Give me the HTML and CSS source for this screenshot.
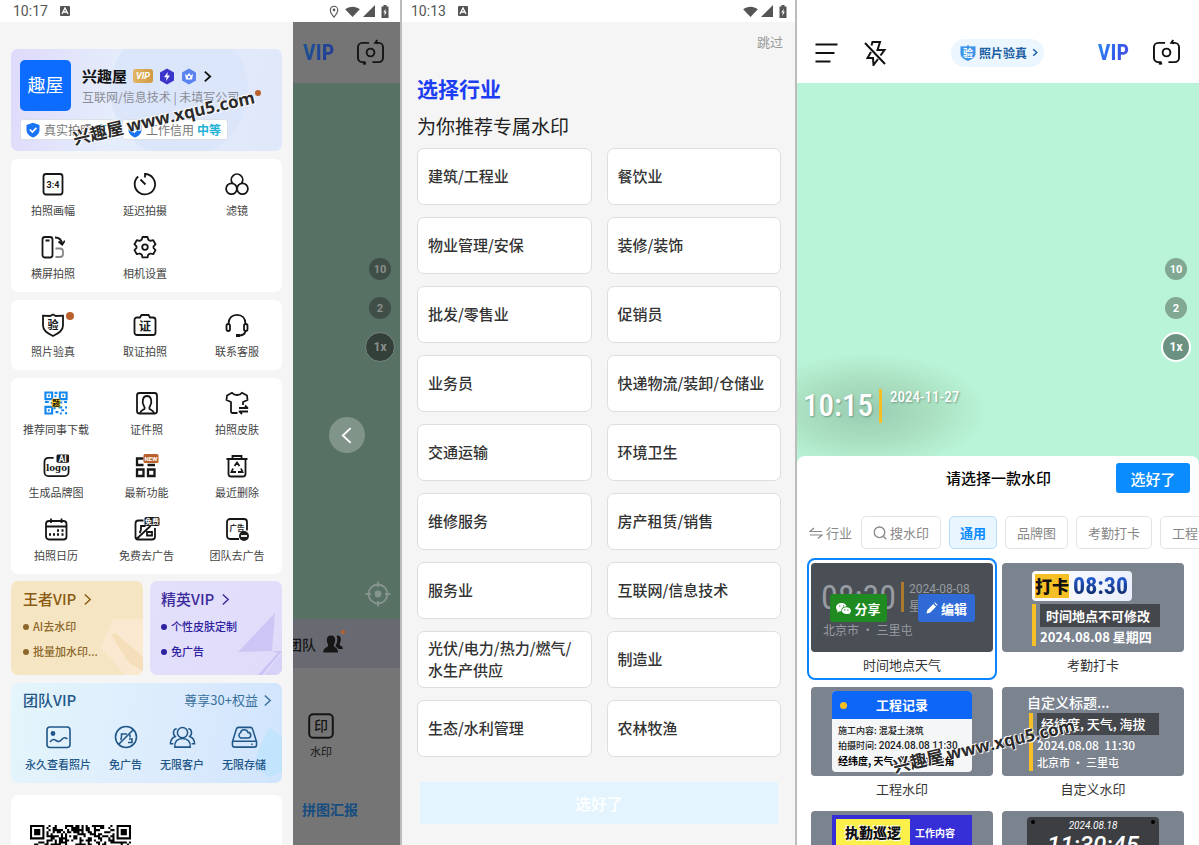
FILE: index.html
```html
<!DOCTYPE html>
<html lang="zh-CN">
<head>
<meta charset="utf-8">
<meta name="viewport" content="width=device-width, initial-scale=1">
<title>水印相机</title>
<link rel="stylesheet" href="styles.css">
</head>
<body>
<svg class="sprite" aria-hidden="true">
  <symbol id="i-notice" viewBox="0 0 12 12"><rect x="1" y="1" width="10" height="10" rx="1" fill="#555"/><path d="M3 9 6 3l3 6M4.300 7h3.400" fill="none" stroke="#fff" stroke-width="1.300"/></symbol>
  <symbol id="i-pin" viewBox="0 0 12 14"><path d="M6 13C3 9.500 2 7.500 2 5.300a4 4 0 0 1 8 0C10 7.500 9 9.500 6 13z" fill="none" stroke="#555" stroke-width="1.200"/><circle cx="6" cy="5.300" r="1.400" fill="#555"/></symbol>
  <symbol id="i-wifi" viewBox="0 0 16 12"><path d="M0 3.500C4.500-.2 11.500-.2 16 3.500L8 12z" fill="#555"/></symbol>
  <symbol id="i-signal" viewBox="0 0 12 12"><path d="M12 0v12H0z" fill="#555"/></symbol>
  <symbol id="i-battery" viewBox="0 0 8 13"><path d="M2.500 0h3v1.500H7.500V13H.5V1.500h2z" fill="#555"/><path d="M4.800 3.500 2.300 7.600h1.500L3.300 11l2.500-4.200H4.300z" fill="#fff"/></symbol>
  <symbol id="i-chevron" viewBox="0 0 10 14"><path d="m2 1.500 6 5.500-6 5.500"/></symbol>
  <symbol id="i-shield" viewBox="0 0 16 16"><path d="M8 .8 14.500 3v5c0 3.500-2.800 6-6.500 7.500C4.300 14 1.500 11.500 1.500 8V3z" fill="#1a73f5"/><path d="m4.800 7.500 2.600 2.600 4-4.200" fill="none" stroke="#fff" stroke-width="1.700"/></symbol>
  <symbol id="i-ratio" viewBox="0 0 24 24"><rect x="2.500" y="2" width="19" height="20.500" rx="2.500"/><text x="12" y="15.500" class="svg-text latin" font-size="9">3:4</text></symbol>
  <symbol id="i-timer" viewBox="0 0 24 24"><path d="M5.200 4.500A10.200 10.200 0 1 0 12 2v3.500M7.500 7.500l5 5"/></symbol>
  <symbol id="i-filter" viewBox="0 0 24 24"><path d="M7.500 11.300a5.700 5.700 0 1 1 9 0"/><circle cx="6.500" cy="16.800" r="5.400"/><circle cx="17.500" cy="16.800" r="5.400"/></symbol>
  <symbol id="i-rotate" viewBox="0 0 24 24"><rect x="1.500" y="2" width="10" height="20.500" rx="2.500"/><path d="M4.500 5.500h4M14 2.500c4.500 0 6.500 2 7 6.500M17.500 6.500l3.700 3.200 2.600-4"/><path d="M14.500 13.500h4.500a3 3 0 0 1 3 3v2.500a3 3 0 0 1-3 3h-4.500" stroke="#888"/></symbol>
  <symbol id="i-gear" viewBox="0 0 24 24"><path d="M9.500 2h5l.8 2.800 2 1.100 2.900-.7 2.300 4.100-2 2.100v1.600l2 2.100-2.300 4.100-2.900-.7-2 1.100-.8 2.800h-5l-.8-2.800-2-1.100-2.900.7-2.300-4.100 2-2.100v-1.600l-2-2.100 2.300-4.100 2.900.7 2-1.100z" stroke-linejoin="round"/><circle cx="12" cy="12.100" r="2.800"/></symbol>
  <symbol id="i-verify" viewBox="0 0 24 24"><path d="M12 1.500 15 3l7-.3v9.800c0 5-4 7.500-10 10.500-6-3-10-5.500-10-10.500V2.700L9 3z"/><text x="12" y="15.800" class="svg-text" font-size="11">验</text></symbol>
  <symbol id="i-evidence" viewBox="0 0 24 24"><path d="M4 4.500H7L8.500 2h7L17 4.500h3a2.500 2.500 0 0 1 2.500 2.500v12.500a2.500 2.500 0 0 1-2.500 2.500H4a2.500 2.500 0 0 1-2.500-2.500V7A2.500 2.500 0 0 1 4 4.500z"/><text x="12" y="17.700" class="svg-text" font-size="12">证</text></symbol>
  <symbol id="i-headset" viewBox="0 0 24 24"><path d="M3.500 11C3.500 5 7 1.800 12 1.800S20.500 5 20.500 11M20.500 18c-.5 3-3 4.500-7 4.500"/><rect x="1.500" y="11" width="3.500" height="7" rx="1.700"/><rect x="19" y="11" width="3.500" height="7" rx="1.700"/><path d="M11 22.500h4" stroke-width="3"/></symbol>
  <symbol id="i-id" viewBox="0 0 24 24"><rect x="2" y="2" width="20" height="20.500" rx="2.500"/><path d="M5 22c1-3 3.500-3 4.500-4.200.6-.9.200-1.600-.5-2.600C6.500 11.500 7.500 5 12 5s5.500 6.500 3 10.200c-.7 1-1.100 1.700-.5 2.600 1 1.200 3.500 1.200 4.500 4.200"/></symbol>
  <symbol id="i-shirt" viewBox="0 0 24 24"><path d="M12.500 22H7.500a1.500 1.500 0 0 1-1.500-1.500V11L1.500 9 2 4.500l5-2.700c1.300 1.700 3 2.200 5 2.200s3.700-.5 5-2.200L22 4.500 22.500 9 18 11v3M14 17h8.500l-2.500-2.500M23 20.500h-8.500l2.500 2.500" stroke-linejoin="round"/></symbol>
  <symbol id="i-ailogo" viewBox="0 0 28 24"><path d="M11 3.500H5.500a4 4 0 0 0-4 4v11a4 4 0 0 0 4 4h17a4 4 0 0 0 4-4V12"/><rect x="14" y="0" width="13" height="8.500" rx="1.500" class="solid"/><text x="20.500" y="7.500" class="svg-text latin inverse" font-size="8.500">AI</text><text x="14" y="17" class="svg-text slab" font-size="9">logo</text></symbol>
  <symbol id="i-apps" viewBox="0 0 26 24"><path d="M10 4.500H3.500v6.500H10M14 11h7.500M3.500 15.500H10V22H3.500zM14.500 15.500H21V22h-6.500z" stroke-width="2.300"/><rect x="10" y="0" width="15" height="9" rx="1.500" class="accent"/><text x="17.500" y="6.800" class="svg-text latin inverse" font-size="6">NEW</text></symbol>
  <symbol id="i-trash" viewBox="0 0 24 24"><path d="M1.500 5h21M7.500 5V2h9v3M3.500 5v15a2.500 2.500 0 0 0 2.500 2.500h12a2.500 2.500 0 0 0 2.500-2.500V5M9.500 12 12 8.500l2.500 3.500M8 14.500l-1.500 3.500H11M16 14.500l1.500 3.500H13"/></symbol>
  <symbol id="i-calendar" viewBox="0 0 24 24"><rect x="2" y="4" width="20.500" height="18.500" rx="3"/><path d="M2 9.500h20.500M7 1.500V6M17.500 1.500V6"/><path d="M13 13.500h2M17.500 13.500h2M5 17.500h2M9 17.500h2M13 17.500h2M17.500 17.500h2" stroke-width="2.300"/></symbol>
  <symbol id="i-noad" viewBox="0 0 26 24"><path d="M10 3.500H5a3 3 0 0 0-3 3V20a2.500 2.500 0 0 0 2.500 2.500h14a3 3 0 0 0 3-3V11M3 22 17 9M6 16c2-2 1.500-5 1.500-7H12M13.500 18.500h5V15h-5z"/><rect x="11" y="0" width="15" height="9" rx="1.500" class="solid"/><text x="18.500" y="7.300" class="svg-text inverse" font-size="7">免费</text></symbol>
  <symbol id="i-teamad" viewBox="0 0 24 24"><path d="M14 22H5a3 3 0 0 1-3-3V5a3 3 0 0 1 3-3h14a3 3 0 0 1 3 3v8.500"/><text x="12" y="14" class="svg-text" font-size="7.500">广告</text><circle cx="19" cy="19" r="5" class="solid"/><path d="M16 19h6" stroke="#fff"/></symbol>
  <symbol id="i-photo" viewBox="0 0 26 24"><rect x="1.500" y="2" width="23" height="20.500" rx="3"/><circle cx="7.500" cy="8.500" r="1.600" fill="currentColor"/><path d="M4.500 17c3-4 5-2.500 7-1s3.500 0 5-1.800 3-2.200 5.500-.2"/></symbol>
  <symbol id="i-banad" viewBox="0 0 24 24"><circle cx="12" cy="12" r="10.500"/><path d="M4.500 19.500 19.500 4.500M6.500 15c1.500-2 1-4 1-6H13M14 17.500h4V14h-3M16 9.500v3"/></symbol>
  <symbol id="i-people" viewBox="0 0 28 24"><circle cx="14" cy="7.500" r="5.300"/><path d="M6 22.500c-.5-5.500 2.500-9 8-9s8.500 3.500 8 9zM8 3.500c-3 0-5 4.500-1.500 8-3.500 1.500-5 4.500-5 7.500h3M20 3.500c3 0 5 4.500 1.500 8 3.500 1.500 5 4.500 5 7.500h-3"/></symbol>
  <symbol id="i-drive" viewBox="0 0 28 24"><path d="M8 2h12a2.500 2.500 0 0 1 2.400 1.800L26.500 17v3a2.500 2.500 0 0 1-2.500 2.500H4A2.500 2.500 0 0 1 1.500 20v-3L5.600 3.800A2.500 2.500 0 0 1 8 2zM2 16.500h24M21 19.500h1.500"/><path d="M10 13a3 3 0 0 1 0-5.500c.5-4 6.500-4 7.500-.3 4 .3 4 5.800 0 5.800z"/></symbol>
  <symbol id="i-camera" viewBox="0 0 30 28"><path d="M13.500 4H6.500A4.500 4.500 0 0 0 2 8.500v11A4.500 4.500 0 0 0 6.500 24H9l.8 2.500M9.300 24 7.500 26.500M17 24h6.500a4.500 4.500 0 0 0 4.500-4.500v-11A4.500 4.500 0 0 0 23.500 4H20l2-3M20 4l2.800.5"/><circle cx="15" cy="14" r="4"/></symbol>
  <symbol id="i-menu" viewBox="0 0 24 24"><path d="M1.500 3.500h22M1.500 12h19M1.500 20.500h15"/></symbol>
  <symbol id="i-flash" viewBox="0 0 24 26"><path d="M8.500 5.500 9.500 2h7.500l-2.500 8h7L17.500 15.500M15 19 10.500 25l-.5-7H4.500l3.500-6M2 3 22 24"/></symbol>
  <symbol id="i-target" viewBox="0 0 26 26"><circle cx="13" cy="13" r="9.500"/><path d="M13 .5V6M13 20v5.500M.5 13H6M20 13h5.500"/><circle cx="13" cy="13" r="2.500" fill="currentColor"/></symbol>
  <symbol id="i-team" viewBox="0 0 20 18"><path d="M13.500.8c3-.8 4.500 1.200 4.300 4.200-.2 2-1 3-1.200 4.500.2 1.500 3.200 1.200 3.400 4.500h-4.500c-1-1.700-2.800-2-3-3.500 1.600-2.300 2.500-6.500 1-9.700z" fill="currentColor"/><path d="M8 .5c3 0 4.500 2 4.200 5-.2 2.200-1.200 3.300-1.400 5 .2 2 4.200 1.800 4.200 7H.3c0-5.200 4.700-5 4.900-7-.2-1.700-1.200-2.800-1.400-5C3.500 2.500 5 .5 8 .5z" fill="currentColor"/></symbol>
  <symbol id="i-stamp" viewBox="0 0 26 26"><rect x="1.200" y="1.200" width="23.600" height="23.600" rx="4"/><text x="13" y="18" class="svg-text medium" font-size="14">印</text></symbol>
  <symbol id="i-swap" viewBox="0 0 14 12"><path d="M5 1 1 4.500h12M1 8h12L9 11.500"/></symbol>
  <symbol id="i-search" viewBox="0 0 14 14"><circle cx="6.500" cy="6.300" r="5.300"/><path d="m10.300 10.300 3 3"/></symbol>
  <symbol id="i-chat" viewBox="0 0 16 13"><path d="M6 .5c3 0 5 1.800 5.200 3.900C8 4.300 5.600 6 5.600 8.500c0 .3 0 .6.1.9L3 9.600 1.300 11l.3-2.200C.6 8 .1 6.500.1 5 .1 2.500 2.800.5 6 .5z" fill="#fff"/><path d="M11 5.200c2.800 0 4.900 1.600 4.900 3.600 0 1.200-.7 2.100-1.500 2.700l.2 1.500-1.500-.9c-3.700.8-6.800-.8-6.800-3.300 0-2 2-3.600 4.700-3.600z" fill="#fff"/><path d="M4 3.600h.1M8 3.600h.1M9.300 8h.1M12.700 8h.1" stroke="#1f8a1f" stroke-width="1.400" stroke-linecap="round"/></symbol>
  <symbol id="i-pen" viewBox="0 0 12 12"><path d="M.5 11.500 1.300 8l6-6 2.700 2.700-6 6zM8.200 1.100 9 .3l2.700 2.700-.8.800z" fill="#fff"/></symbol>
</svg>

<main class="screens">
  <section class="phone" aria-label="侧边菜单">
    <div class="status-bar">
      <span>10:17</span><svg class="s12"><use href="#i-notice"/></svg>
      <div class="status-right">
        <svg class="pin"><use href="#i-pin"/></svg><svg class="wifi"><use href="#i-wifi"/></svg><svg class="signal"><use href="#i-signal"/></svg><svg class="battery"><use href="#i-battery"/></svg>
      </div>
    </div>
    <div class="split">
      <div class="drawer">
        <div class="profile">
          <div class="profile-top">
            <div class="avatar">趣屋</div>
            <div class="profile-info">
              <div class="profile-name"><strong>兴趣屋</strong><span class="vip-tag">VIP</span>
                <svg class="hex" viewBox="0 0 16 17"><path d="M8 .5 15 4.500v8L8 16.500 1 12.500v-8z" fill="#3b36c9"/><path d="M8.800 4 5 9.300h2.600L7 13l4-5.400H8.300z" fill="#fff"/></svg>
                <svg class="hex" viewBox="0 0 16 17"><path d="M8 .5 15 4.500v8L8 16.500 1 12.500v-8z" fill="#5b83f0"/><path d="m4 6 2 1.500L8 5l2 2.500L12 6l-1 5.500H5z" fill="#fff"/><circle cx="8" cy="9" r="1.200" fill="#5b83f0"/></svg>
                <svg class="chev line"><use href="#i-chevron"/></svg>
              </div>
              <div class="profile-sub">互联网/信息技术 | 未填写公司...</div>
            </div>
          </div>
          <div class="chips">
            <span class="chip"><svg class="s16"><use href="#i-shield"/></svg>真实拍照 <b>高</b></span>
            <span class="chip"><svg class="s16"><use href="#i-shield"/></svg>工作信用 <b>中等</b></span>
          </div>
          <i class="dot profile-dot"></i>
          <div class="site-mark">兴趣屋 <span>www.xqu5.com</span></div>
        </div>

        <div class="card tools narrow">
          <button class="tool"><svg class="icon"><use href="#i-ratio"/></svg>拍照画幅</button>
          <button class="tool"><svg class="icon"><use href="#i-timer"/></svg>延迟拍摄</button>
          <button class="tool"><svg class="icon"><use href="#i-filter"/></svg>滤镜</button>
          <button class="tool"><svg class="icon"><use href="#i-rotate"/></svg>横屏拍照</button>
          <button class="tool"><svg class="icon"><use href="#i-gear"/></svg>相机设置</button>
        </div>
        <div class="card tools narrow">
          <button class="tool"><svg class="icon"><use href="#i-verify"/></svg>照片验真<i class="dot tool-dot"></i></button>
          <button class="tool"><svg class="icon"><use href="#i-evidence"/></svg>取证拍照</button>
          <button class="tool"><svg class="icon"><use href="#i-headset"/></svg>联系客服</button>
        </div>
        <div class="card tools">
          <button class="tool">
            <svg class="icon" viewBox="0 0 25 25"><g class="qr-blue"><path d="M1.500 1.500h7v7h-7zM16.500 1.500h7v7h-7zM1.500 16.500h7v7h-7z"/><path d="M4 5h2M19 5h2M4 20h2M11 2h3M11 5.500h2M1 11.500h4M7 12.500h2M16 12h3M21 11.500h3M11 16v3M12 22h3M15 17h4M18 20h3M22 17h2M22 23h2M16.500 23.500h2"/></g><rect x="8" y="8" width="9" height="9" class="qr-core"/><text x="12.500" y="15.500" class="svg-text" font-size="8">题</text></svg>推荐同事下载</button>
          <button class="tool"><svg class="icon"><use href="#i-id"/></svg>证件照</button>
          <button class="tool"><svg class="icon"><use href="#i-shirt"/></svg>拍照皮肤</button>
          <button class="tool"><svg class="icon wide"><use href="#i-ailogo"/></svg>生成品牌图</button>
          <button class="tool"><svg class="icon wide"><use href="#i-apps"/></svg>最新功能</button>
          <button class="tool"><svg class="icon"><use href="#i-trash"/></svg>最近删除</button>
          <button class="tool"><svg class="icon"><use href="#i-calendar"/></svg>拍照日历</button>
          <button class="tool"><svg class="icon wide"><use href="#i-noad"/></svg>免费去广告</button>
          <button class="tool"><svg class="icon"><use href="#i-teamad"/></svg>团队去广告</button>
        </div>

        <div class="vip-row">
          <div class="vip king">
            <svg class="vip-art" viewBox="0 0 44 62"><path d="M14 6h30v56H26L2 34z" fill="#fae9d0"/><path d="m12 22 4-2 24 20 4 4v14L30 50z" fill="#f4dfba"/></svg>
            <h3>王者VIP <svg class="chev line"><use href="#i-chevron"/></svg></h3>
            <ul><li>AI去水印</li><li>批量加水印...</li></ul>
          </div>
          <div class="vip elite">
            <svg class="vip-art" viewBox="0 0 44 62"><path d="M37 0 0 39l34-1z" fill="#cdc6f4"/><path d="M34 38h10L24 62h-4l20-22z" fill="#c9c2f2"/><path d="M44 40v22H26z" fill="#d6d2f7"/></svg>
            <h3>精英VIP <svg class="chev line"><use href="#i-chevron"/></svg></h3>
            <ul><li>个性皮肤定制</li><li>免广告</li></ul>
          </div>
        </div>

        <div class="team-vip">
          <svg class="team-art" viewBox="0 0 34 60"><path d="m20 2 14 12v38L20 59 2 46 8 26z" fill="#b8e2fb" opacity=".6"/></svg>
          <div class="team-head"><h3>团队VIP</h3><a href="#">尊享30+权益 <svg class="chev line"><use href="#i-chevron"/></svg></a></div>
          <div class="team-list">
            <div><svg class="icon wide"><use href="#i-photo"/></svg>永久查看照片</div>
            <div><svg class="icon"><use href="#i-banad"/></svg>免广告</div>
            <div><svg class="icon wide"><use href="#i-people"/></svg>无限客户</div>
            <div><svg class="icon wide"><use href="#i-drive"/></svg>无限存储</div>
          </div>
        </div>

        <div class="card qr-card"><svg id="qr" class="qr" viewBox="0 0 49 49" role="img" aria-label="二维码"></svg></div>
      </div>

      <div class="dimmed">
        <div class="dim-bar"><span class="vip-word dark">VIP</span><svg class="cam line"><use href="#i-camera"/></svg></div>
        <div class="dim-view">
          <div class="zooms"><button>10</button><button>2</button><button class="on">1x</button></div>
          <button class="back" aria-label="返回"><svg viewBox="0 0 14 20"><path d="M11.500 2 3 10l8.500 8"/></svg></button>
          <svg class="target"><use href="#i-target"/></svg>
        </div>
        <div class="dim-team"><span>团队</span><svg class="team-icon"><use href="#i-team"/></svg><i class="dot small"></i></div>
        <div class="dim-foot">
          <button class="stamp"><svg><use href="#i-stamp"/></svg>水印</button>
          <a href="#">拼图汇报</a>
        </div>
      </div>
    </div>
  </section>

  <section class="phone industry" aria-label="选择行业">
    <div class="status-bar">
      <span>10:13</span><svg class="s12"><use href="#i-notice"/></svg>
      <div class="status-right">
        <svg class="wifi"><use href="#i-wifi"/></svg><svg class="signal"><use href="#i-signal"/></svg><svg class="battery"><use href="#i-battery"/></svg>
      </div>
    </div>
    <div class="industry-body">
      <a class="skip" href="#">跳过</a>
      <h1>选择行业</h1>
      <p>为你推荐专属水印</p>
      <div class="options">
        <button>建筑/工程业</button><button>餐饮业</button>
        <button>物业管理/安保</button><button>装修/装饰</button>
        <button>批发/零售业</button><button>促销员</button>
        <button>业务员</button><button>快递物流/装卸/仓储业</button>
        <button>交通运输</button><button>环境卫生</button>
        <button>维修服务</button><button>房产租赁/销售</button>
        <button>服务业</button><button>互联网/信息技术</button>
        <button>光伏/电力/热力/燃气/<br>水生产供应</button><button>制造业</button>
        <button>生态/水利管理</button><button>农林牧渔</button>
      </div>
      <button class="submit">选好了</button>
    </div>
  </section>

  <section class="phone chooser" aria-label="选择水印">
    <div class="toolbar">
      <div class="toolbar-side">
        <svg class="s24 line"><use href="#i-menu"/></svg><svg class="flash line"><use href="#i-flash"/></svg>
      </div>
      <button class="verify">
        <svg class="s16" viewBox="0 0 16 16"><path d="M8 0 10 1.500l5.500-.2V8.500c0 3.500-3 5.500-7.500 7.500C3.500 14 .5 12 .5 8.500V1.300L6 1.500z" fill="#3d94ea"/><text x="8" y="12" class="svg-text inverse" font-size="10">验</text></svg>
        照片验真<svg class="tiny line"><use href="#i-chevron"/></svg>
      </button>
      <div class="toolbar-side end"><span class="vip-word">VIP</span><svg class="cam line"><use href="#i-camera"/></svg></div>
    </div>
    <div class="preview">
      <div class="zooms"><button>10</button><button>2</button><button class="on">1x</button></div>
      <div class="clock"><strong>10:15</strong><i></i><span>2024-11-27</span></div>
    </div>
    <div class="panel">
      <div class="panel-head"><h2>请选择一款水印</h2><button class="done">选好了</button></div>
      <div class="tabs">
        <button class="plain"><svg class="swap line"><use href="#i-swap"/></svg>行业</button>
        <button><svg class="s14 line"><use href="#i-search"/></svg>搜水印</button>
        <button class="active">通用</button><button>品牌图</button><button>考勤打卡</button><button>工程记录</button>
      </div>
      <div class="marks">
        <figure class="mark selected">
          <div class="thumb t-weather">
            <div class="row"><strong>08:30</strong><i class="bar"></i><div class="lines">2024-08-08<br>星期四 32°C</div></div>
            <div class="place">北京市 · 三里屯</div>
            <div class="actions"><button class="share"><svg class="chat"><use href="#i-chat"/></svg>分享</button><button class="edit"><svg class="s12"><use href="#i-pen"/></svg>编辑</button></div>
          </div>
          <figcaption>时间地点天气</figcaption>
        </figure>
        <figure class="mark">
          <div class="thumb t-punch">
            <div class="punch"><b>打卡</b><strong>08:30</strong></div>
            <div class="ruled"><div class="box">时间地点不可修改</div><div>2024.08.08 星期四</div></div>
          </div>
          <figcaption>考勤打卡</figcaption>
        </figure>
        <figure class="mark">
          <div class="thumb t-work">
            <div class="sheet"><div class="sheet-head"><i></i>工程记录</div>
              <div class="sheet-body"><div>施工内容: 混凝土浇筑</div><div>拍摄时间: <span>2024.08.08 11:30</span></div><b>经纬度, 天气, 海拔, 方位角</b></div></div>
          </div>
          <figcaption>工程水印</figcaption>
        </figure>
        <figure class="mark">
          <div class="thumb t-custom">
            <div class="title">自定义标题...</div>
            <div class="ruled"><div class="box">经纬度, 天气, 海拔</div><div>2024.08.08&nbsp; 11:30</div><div class="sub">北京市 · 三里屯</div></div>
          </div>
          <figcaption>自定义水印</figcaption>
        </figure>
        <figure class="mark">
          <div class="thumb t-patrol"><div class="patrol"><b>执勤巡逻</b><span>工作内容</span></div></div>
        </figure>
        <figure class="mark">
          <div class="thumb t-digital"><div class="digital"><i></i><div><small>2024.08.18</small><strong>11:30:45</strong></div><i></i></div></div>
        </figure>
      </div>
      <div class="site-mark">兴趣屋 <span>www.xqu5.com</span></div>
    </div>
  </section>
</main>
<script src="qr.js"></script>
</body>
</html>
```
FILE: styles.css
```css
* { box-sizing: border-box; }
body, h1, h2, h3, p, ul, figure { margin: 0; padding: 0; }
body {
  font-family: "Noto Sans CJK SC", "Noto Sans", sans-serif;
  color: #333;
  background: #fff;
  overflow: hidden;
}
button { font: inherit; color: inherit; border: 0; padding: 0; background: none; cursor: pointer; }
a { color: inherit; text-decoration: none; }
svg { flex: none; }
.sprite { display: none; }
.svg-text { fill: currentColor; stroke: none; text-anchor: middle; font-weight: 700; }
.medium { font-weight: 500; }
.latin { font-family: Roboto, sans-serif; }
.slab { font-family: "DejaVu Serif", serif; }
.inverse { fill: #fff; }
.solid { fill: #1b1b1b; stroke: none; }
.accent { fill: #b9602c; stroke: none; }
.line { fill: none; stroke: currentColor; stroke-width: 2; }
.s12 { width: 12px; height: 12px; }
.s14 { width: 14px; height: 14px; }
.s16 { width: 16px; height: 16px; }
.s24 { width: 24px; height: 24px; }
.chev { width: 9px; height: 13px; }
.dot { display: block; width: 8px; height: 8px; border-radius: 50%; background: #b9602c; }

.screens { display: grid; grid-template-columns: 400fr 395fr 404fr; height: 100vh; }
.phone { display: flex; flex-direction: column; min-width: 0; overflow: hidden; }
.phone + .phone { border-left: 2px solid #bcbcbc; }
.status-bar {
  display: flex; align-items: center; gap: 11px; flex: none;
  height: 22px; padding: 0 11px 0 13px;
  font: 14px Roboto, sans-serif; color: #555; background: #fff;
}
.status-right { display: flex; align-items: center; gap: 3px; margin-left: auto; }
.pin { width: 12px; height: 13px; margin-right: 2px; }
.wifi { width: 15px; height: 11px; }
.signal { width: 12px; height: 12px; }
.battery { width: 8px; height: 13px; margin-left: 3px; }

/* Drawer */
.split { display: grid; grid-template-columns: 293fr 107fr; flex: 1; min-height: 0; }
.drawer { display: flex; flex-direction: column; gap: 8px; padding: 27px 11px 0; background: #f5f5f5; min-width: 0; overflow: hidden; }
.drawer > * { flex: none; }
.card { background: #fff; border-radius: 7px; }
.profile {
  position: relative; padding: 11px 9px 11px; border-radius: 7px;
  background: radial-gradient(circle at 62% 40%, #dce6fb 0 38%, transparent 39%), linear-gradient(100deg, #dedafb, #e5edfb 40%, #dfe7fa);
}
.profile-top { display: flex; gap: 11px; height: 51px; }
.avatar { width: 51px; height: 51px; border-radius: 5px; background: #0b6cff; color: #fff; font-size: 18px; line-height: 49px; text-align: center; flex: none; }
.profile-info { min-width: 0; padding-top: 5px; }
.profile-name { display: flex; align-items: center; gap: 6px; height: 22px; color: #111; font-size: 15px; line-height: 22px; }
.vip-tag { width: 20px; height: 14px; border-radius: 3px; background: linear-gradient(90deg, #e2b565, #cf9a44); color: #fff; font: italic 700 9px/14px Roboto, sans-serif; text-align: center; }
.hex { width: 16px; height: 17px; }
.profile-sub { font-size: 12px; line-height: 20px; color: #8a8d96; white-space: nowrap; }
.chips { display: flex; gap: 8px; margin-top: 8px; }
.chip { display: flex; align-items: center; gap: 3px; height: 21px; padding: 0 6px 0 4px; border: 1px solid #dadfe8; border-radius: 3px; background: #fff; font-size: 12px; color: #777; white-space: nowrap; }
.chip b { color: #22b2d6; }
.profile-dot { position: absolute; right: 21px; top: 41px; width: 6px; height: 6px; }
.site-mark {
  position: absolute; left: 60px; top: 56px; white-space: nowrap;
  font-size: 17px; font-weight: 700; line-height: 24px; color: #2a2a2a;
  transform: rotate(-13deg);
  text-shadow: 0 0 2px #fff, 1px 1px 0 #fff, -1px -1px 0 #fff;
}
.site-mark span { font-family: "Open Sans", sans-serif; font-weight: 700; font-size: 17px; }

.tools { display: grid; grid-template-columns: repeat(3, 66px); justify-content: space-between; row-gap: 16px; padding: 13px 12px 10px; }
.tools.narrow { grid-template-columns: repeat(3, 60px); padding-right: 15px; }
.tool { position: relative; display: flex; flex-direction: column; align-items: center; gap: 6px; padding-bottom: 1px; font-size: 11px; line-height: 16px; color: #444; white-space: nowrap; }
.icon { width: 24px; height: 24px; fill: none; stroke: currentColor; stroke-width: 1.6; }
.tool .icon { color: #161616; stroke-width: 1.8; }
.icon.wide { width: 27px; }
.tool-dot { position: absolute; right: 9px; top: -1px; }
.qr-blue { stroke: #1187f2; stroke-width: 2.2; }
.qr-core { fill: #f6c722; stroke: none; }

.vip-row { display: grid; grid-template-columns: 1fr 1fr; gap: 7px; margin-top: -1px; }
.vip { position: relative; overflow: hidden; padding: 7px 0 11px 12px; border-radius: 7px; }
.vip h3 { position: relative; display: flex; align-items: center; gap: 7px; font-size: 15px; line-height: 22px; font-weight: 500; }
.vip ul { position: relative; list-style: none; margin-top: 4px; font-size: 11px; line-height: 25px; font-weight: 500; }
.vip li::before { content: ""; display: inline-block; width: 6px; height: 6px; margin-right: 4px; border-radius: 50%; background: currentColor; vertical-align: 1px; }
.vip .chev { stroke-width: 1.6; }
.vip-art { position: absolute; right: 0; bottom: 0; width: 44px; height: 62px; }
.king { background: #f6e5c3; color: #8a5b12; }
.king ul { color: #8b6729; }
.elite { padding-left: 11px; background: linear-gradient(120deg, #e3e0fb, #dfdbfa); color: #3d2c9c; }
.elite ul { color: #2e22a0; }

.team-vip { position: relative; overflow: hidden; padding: 6px 14px 10px 12px; border-radius: 7px; background: linear-gradient(100deg, #e4f5fb, #dcebfd 60%, #cfe4fd); color: #1f5788; }
.team-art { position: absolute; right: 0; bottom: 2px; width: 30px; height: 58px; }
.team-head { position: relative; display: flex; justify-content: space-between; align-items: center; margin-right: -4px; }
.team-head h3 { font-size: 15px; line-height: 22px; font-weight: 500; }
.team-head a { display: flex; align-items: center; gap: 5px; font-size: 13px; line-height: 20px; color: #39709c; }
.team-head .chev { stroke-width: 1.6; }
.team-list { position: relative; display: flex; justify-content: space-between; margin: 14px 2px 0; }
.team-list div { display: flex; flex-direction: column; align-items: center; gap: 6px; font-size: 11px; line-height: 18px; font-weight: 500; }
.qr-card { margin-top: 4px; padding: 30px 19px; }
.qr { display: block; width: 101px; height: 101px; }

/* Camera under the drawer */
.dimmed { display: flex; flex-direction: column; background: #757575; color: #161616; min-width: 0; }
.dim-bar { display: flex; align-items: center; justify-content: space-between; height: 61px; padding: 0 15px 0 10px; }
.vip-word { font: 700 22px/24px "Roboto Condensed", Roboto, sans-serif; background: linear-gradient(120deg, #2f8cf5, #3559e8 60%, #5a55ea); background-clip: text; color: transparent; }
.vip-word.dark { background-image: linear-gradient(120deg, #1d5590, #24389b); }
.cam { width: 29px; height: 27px; }
.dim-view { display: flex; flex-direction: column; padding: 175px 5px 12px; background: #577164; }
.zooms { align-self: flex-end; display: flex; flex-direction: column; align-items: center; width: 30px; }
.zooms button { width: 22px; height: 22px; margin-bottom: 17px; border-radius: 50%; background: #80a893; color: #fff; font: 700 11px Roboto, sans-serif; }
.zooms .on { width: 30px; height: 30px; margin: -4px 0 0; border: 2px solid #fff; background: #6b9280; font-size: 12px; }
.dim-view .zooms button { background: #3f4f47; color: #8b8f8d; }
.dim-view .zooms .on { background: #333f39; border: 1px solid #77877f; }
.back { align-self: center; display: grid; place-items: center; width: 36px; height: 36px; margin-top: 55px; border-radius: 50%; background: #809489; }
.back svg { width: 13px; height: 19px; fill: none; stroke: #fff; stroke-width: 2; }
.target { align-self: flex-end; width: 26px; height: 26px; margin: 128px 4px 0 0; fill: none; stroke: currentColor; stroke-width: 1.8; color: #85958d; }
.dim-team { position: relative; display: flex; align-items: center; justify-content: flex-end; gap: 7px; height: 49px; padding-right: 57px; overflow: hidden; background: #696a71; font-size: 14px; font-weight: 500; }
.dim-team span { flex: none; }
.team-icon { width: 20px; height: 18px; }
.dot.small { position: absolute; right: 55px; top: 11px; width: 4px; height: 4px; }
.dim-foot { display: flex; flex-direction: column; align-items: flex-start; padding: 45px 9px 0; }
.stamp { display: flex; flex-direction: column; align-items: center; gap: 4px; margin-left: 6px; font-size: 11px; line-height: 16px; }
.stamp svg { width: 26px; height: 26px; fill: none; stroke: currentColor; stroke-width: 2; }
.dim-foot a { margin-top: 39px; font-size: 14px; line-height: 22px; font-weight: 700; color: #174d80; }

/* Industry */
.industry { background: #f5f5f5; }
.industry .status-bar { padding: 0 8px 0 9px; }
.industry-body { display: flex; flex-direction: column; padding: 10px 14px 0 15px; }
.skip { align-self: flex-end; margin-right: -2px; font-size: 13px; line-height: 20px; color: #999; }
h1 { margin-top: 21px; font-size: 21px; line-height: 30px; color: #1c3df2; }
.industry p { margin-top: 9px; font-size: 19px; line-height: 28px; color: #222; }
.options { display: grid; grid-template-columns: 1fr 1fr; grid-auto-rows: 57px; gap: 12px 15px; margin-top: 8px; }
.options button { padding: 0 10px 2px; border: 1px solid #dedede; border-radius: 7px; background: #fff; text-align: left; font-size: 15px; line-height: 22px; font-weight: 500; color: #333; white-space: nowrap; }
.submit { height: 42px; margin: 25px 3px 0; background: #e3f4fe; color: #fff; font-size: 16px; font-weight: 500; }

/* Watermark chooser */
.toolbar { display: grid; grid-template-columns: 1fr auto 1fr; align-items: center; flex: none; height: 83px; padding: 22px 18px 0 17px; color: #111; }
.toolbar-side { display: flex; align-items: center; gap: 25px; }
.end { justify-content: flex-end; gap: 23px; }
.flash { width: 24px; height: 26px; }
.verify { display: flex; align-items: center; gap: 3px; height: 28px; padding: 0 6px 0 9px; border-radius: 14px; background: #ebf6ff; color: #1a5ea3; font-size: 12px; font-weight: 700; }
.tiny { width: 6px; height: 9px; margin-left: 2px; stroke-width: 2.4; }
.preview { display: flex; flex-direction: column; justify-content: space-between; flex: none; padding: 175px 8px 40px 6px; height: 380px;
  background: radial-gradient(ellipse 120px 58px at 70px 328px, #99cdb3, #a9debf 50%, transparent), #b9f4d8; }
.clock { display: flex; height: 34px; color: #fff; text-shadow: 1px 1px 2px #6d9a84; }
.clock strong { font: 500 31px/34px "Roboto Condensed", "Liberation Sans Narrow", Roboto, sans-serif; }
.clock i { width: 3px; margin: 0 8px 0 6px; background: #f6bf26; }
.clock span { font: 500 15px/16px "Roboto Condensed", Roboto, sans-serif; }
.panel { position: relative; flex: 1; min-height: 0; margin-top: -7px; padding-left: 10px; border-radius: 8px 8px 0 0; background: #fff; }
.panel-head { display: grid; grid-template-columns: 1fr auto 1fr; align-items: center; padding: 7px 9px 0 0; }
.panel-head h2 { grid-column: 2; font-size: 15px; line-height: 22px; font-weight: 500; color: #000; }
.done { justify-self: end; width: 74px; height: 30px; border-radius: 3px; background: #0a8cff; color: #fff; font-size: 15px; font-weight: 500; }
.tabs { display: flex; gap: 8px; margin-top: 23px; overflow: hidden; }
.tabs button { display: flex; align-items: center; gap: 3px; flex: none; height: 33px; padding: 0 11px; border: 1px solid #e3e3e3; border-radius: 5px; font-size: 13px; color: #888; }
.tabs .plain { border-color: transparent; padding: 0 1px 0 2px; border-width: 0; }
.tabs .active { padding: 0 10px; border-color: #b5dcfb; background: #eaf6ff; color: #0a8cff; font-weight: 700; }
.swap { width: 14px; height: 12px; stroke-width: 1.2; }
.tabs .s14 { stroke-width: 1.3; }
.marks { display: grid; grid-template-columns: 1fr 1fr; gap: 2px 1px; margin: 9px 11px 0 0; }
.mark { border: 2px solid transparent; border-radius: 8px; padding: 3px 2px 0; min-width: 0; }
.mark.selected { border-color: #0a84ff; }
.mark figcaption { font-size: 13px; line-height: 26px; text-align: center; color: #333; }
.thumb { position: relative; height: 89px; border-radius: 4px; overflow: hidden; background: #7b838f; color: #fff; }
.t-weather { background: #4a4e55; color: #989ca2; padding: 17px 10px; }
.row { display: flex; }
.row strong { font: 400 34px/34px "Roboto Condensed", "Liberation Sans Narrow", Roboto, sans-serif; }
.bar { width: 3px; height: 30px; margin: 2px 5px 0 5px; background: #a97a2d; }
.lines { font: 12px/18px "Roboto", "Noto Sans CJK SC", sans-serif; white-space: nowrap; }
.place { margin: 4px 2px; font-size: 12px; line-height: 20px; }
.actions { position: absolute; inset: 31px 18px auto 19px; display: flex; justify-content: space-between; }
.actions button { display: flex; align-items: center; justify-content: center; gap: 3px; width: 57px; height: 28px; border-radius: 3px; color: #fff; font-size: 13px; font-weight: 700; }
.chat { width: 15px; height: 13px; }
.share { background: #1f8a1f; }
.edit { background: #2f6ad6; }
.t-punch { padding: 8px 24px 0 30px; }
.punch { display: flex; width: fit-content; align-items: center; gap: 4px; height: 30px; padding: 0 4px 0 3px; border-radius: 4px; background: linear-gradient(120deg, #fff, #e9eefb); color: #111; }
.punch b { background: #f6bf26; font-size: 17px; line-height: 24px; font-weight: 900; }
.punch strong { font: 700 24px/28px "Roboto Condensed", "Liberation Sans Narrow", Roboto, sans-serif; background: linear-gradient(#2c6cf0, #0a1e4d); background-clip: text; color: transparent; }
.ruled { border-left: 4px solid #f6bf26; padding-left: 4px; font-size: 13px; line-height: 19px; font-weight: 700; white-space: nowrap; }
.t-punch .ruled { margin-top: 3px; }
.box { padding: 0 6px; background: #44474c; line-height: 23px; }
.t-work { padding: 4px 21px; }
.sheet { overflow: hidden; border-radius: 4px; background: #f5f6f8; color: #222; }
.sheet-head { position: relative; background: #0d66f5; color: #fff; font-size: 13px; font-weight: 700; line-height: 28px; text-align: center; }
.sheet-head i { position: absolute; left: 8px; top: 11px; width: 7px; height: 7px; border-radius: 50%; background: #f6bf26; }
.sheet-body { padding: 4px 6px 3px; font-size: 9px; line-height: 15px; font-weight: 500; white-space: nowrap; }
.sheet-body span { font: 500 10px Roboto, sans-serif; }
.sheet-body b { font-size: 10px; color: #000; }
.t-custom { padding: 4px 25px; }
.title { font-size: 14px; line-height: 22px; font-weight: 500; }
.t-custom .ruled { margin-left: 2px; font-weight: 500; font-size: 12px; }
.t-custom .box { padding: 0 4px; font-size: 13px; line-height: 22px; }
.sub { font-size: 11px; line-height: 17px; }
.t-patrol { padding: 4px 21px 0; }
.patrol { display: flex; height: 85px; padding: 4px; background: #362ed6; }
.patrol b { flex: none; height: 81px; padding: 0 9px; background: #fbf04a; color: #111; font-size: 14px; line-height: 27px; font-weight: 900; text-shadow: 1px 1px 0 #fff, -1px -1px 0 #fff; }
.patrol span { padding-left: 5px; font-size: 10px; line-height: 28px; font-weight: 700; white-space: nowrap; }
.t-digital { padding: 6px 25px 0; }
.digital { display: flex; justify-content: space-between; height: 83px; padding: 3px 4px; border-radius: 4px; background: #3c3e42; text-align: center; }
.digital i { width: 4px; height: 4px; border-radius: 50%; background: #000; }
.digital small { display: block; font: italic 10px/12px Roboto, sans-serif; }
.digital strong { display: block; font: italic 500 24px/26px Roboto, sans-serif; }
.panel > .site-mark { left: 94px; top: 277px; }
```
FILE: qr.js
```js
// Fills the drawer's code block with modules and three finder squares.
(function () {
  var n = 49, seed = 7, d = "";
  function rnd() { seed = (seed * 1103515245 + 12345) % 2147483648; return seed / 2147483648; }
  for (var y = 0; y < n; y++) {
    for (var x = 0; x < n; x++) {
      var corner = (x < 8 && y < 8) || (x > n - 9 && y < 8) || (x < 8 && y > n - 9);
      if (rnd() > 0.48 && !corner) d += "M" + x + " " + y + "h1v1h-1z";
    }
  }
  [[0, 0], [n - 7, 0], [0, n - 7]].forEach(function (p) {
    d += "M" + p[0] + " " + p[1] + "h7v7h-7zm1 1v5h5v-5zm1 1h3v3h-3z";
  });
  var path = document.createElementNS("http://www.w3.org/2000/svg", "path");
  path.setAttribute("d", d);
  document.getElementById("qr").appendChild(path);
})();
```
